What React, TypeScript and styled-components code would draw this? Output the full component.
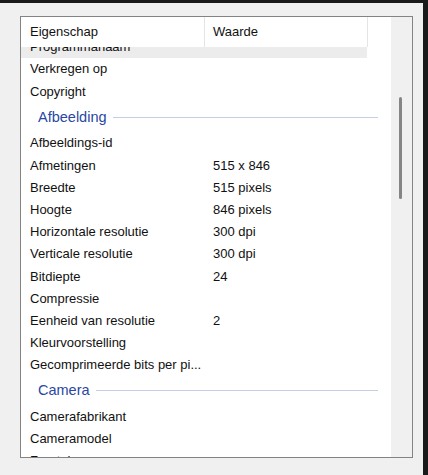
import styled, { createGlobalStyle } from "styled-components";

type Item =
    | { kind: "row"; name: string; value?: string; hot?: boolean }
    | { kind: "group"; title: string };

const items: Item[] = [
    { kind: "row", name: "Programmanaam", hot: true },
    { kind: "row", name: "Verkregen op" },
    { kind: "row", name: "Copyright" },
    { kind: "group", title: "Afbeelding" },
    { kind: "row", name: "Afbeeldings-id" },
    { kind: "row", name: "Afmetingen", value: "515 x 846" },
    { kind: "row", name: "Breedte", value: "515 pixels" },
    { kind: "row", name: "Hoogte", value: "846 pixels" },
    { kind: "row", name: "Horizontale resolutie", value: "300 dpi" },
    { kind: "row", name: "Verticale resolutie", value: "300 dpi" },
    { kind: "row", name: "Bitdiepte", value: "24" },
    { kind: "row", name: "Compressie" },
    { kind: "row", name: "Eenheid van resolutie", value: "2" },
    { kind: "row", name: "Kleurvoorstelling" },
    { kind: "row", name: "Gecomprimeerde bits per pi..." },
    { kind: "group", title: "Camera" },
    { kind: "row", name: "Camerafabrikant" },
    { kind: "row", name: "Cameramodel" },
    { kind: "row", name: "F-getal" },
];

const GlobalStyle = createGlobalStyle`
  html, body {
    margin: 0;
    padding: 0;
    background: #1a1a1a;
  }
  body {
    font-family: "Liberation Sans", Arial, sans-serif;
    font-size: 13px;
    color: #111;
  }
`;

const Window = styled.div`
  box-sizing: border-box;
  margin-top: 3px;
  width: 423px;
  height: 472px;
  background: #f0f0f0;
  padding: 13px 0 0 20px;
`;

const ListBox = styled.div`
  box-sizing: border-box;
  width: 393px;
  height: 442px;
  border: 1px solid #838383;
  background: #fff;
  display: flex;
`;

const Content = styled.div`
  flex: 1;
  display: flex;
  flex-direction: column;
  overflow: hidden;
`;

const Header = styled.div`
  flex: none;
  box-sizing: border-box;
  width: 347px;
  height: 30px;
  display: grid;
  grid-template-columns: 184px 1fr;
  border-right: 1px solid #e5e5e5;
`;

const HeaderCell = styled.div<{ $first?: boolean }>`
  display: flex;
  align-items: center;
  padding-left: ${(p) => (p.$first ? "9px" : "8px")};
  border-right: ${(p) => (p.$first ? "1px solid #e5e5e5" : "none")};
  padding-bottom: 1px;
`;

const Viewport = styled.div`
  flex: 1;
  overflow: hidden;
`;

const Scroller = styled.div`
  margin-top: -11.3px;
`;

const Row = styled.div<{ $hot?: boolean }>`
  width: 346px;
  height: 22.2px;
  display: grid;
  grid-template-columns: 184px 1fr;
  align-items: center;
  background: ${(p) => (p.$hot ? "#ececec" : "transparent")};
  white-space: nowrap;
`;

const Cell = styled.div<{ $value?: boolean }>`
  padding-left: ${(p) => (p.$value ? "8px" : "9px")};
  overflow: hidden;
`;

const Group = styled.div`
  height: 29.6px;
  display: flex;
  align-items: center;
  gap: 6px;
  padding-left: 17px;
  margin-right: 13px;
`;

const GroupTitle = styled.span`
  font-size: 14.5px;
  color: #2a47a2;
  padding-bottom: 1px;
`;

const GroupLine = styled.div`
  flex: 1;
  height: 1px;
  background: #c6cee6;
`;

const Track = styled.div`
  flex: none;
  width: 21px;
  background: #f0f0f0;
  padding: 80px 0 0 8px;
  box-sizing: border-box;
`;

const Thumb = styled.div`
  width: 3px;
  height: 102px;
  border-radius: 2px;
  background: #858585;
`;

export default function App() {
    return (
        <>
            <GlobalStyle />
            <Window>
                <ListBox>
                    <Content>
                        <Header>
                            <HeaderCell $first>Eigenschap</HeaderCell>
                            <HeaderCell>Waarde</HeaderCell>
                        </Header>
                        <Viewport>
                            <Scroller>
                                {items.map((it, i) =>
                                    it.kind === "group" ? (
                                        <Group key={i}>
                                            <GroupTitle>{it.title}</GroupTitle>
                                            <GroupLine />
                                        </Group>
                                    ) : (
                                        <Row key={i} $hot={it.hot}>
                                            <Cell>{it.name}</Cell>
                                            <Cell $value>{it.value}</Cell>
                                        </Row>
                                    )
                                )}
                            </Scroller>
                        </Viewport>
                    </Content>
                    <Track>
                        <Thumb />
                    </Track>
                </ListBox>
            </Window>
        </>
    );
}
